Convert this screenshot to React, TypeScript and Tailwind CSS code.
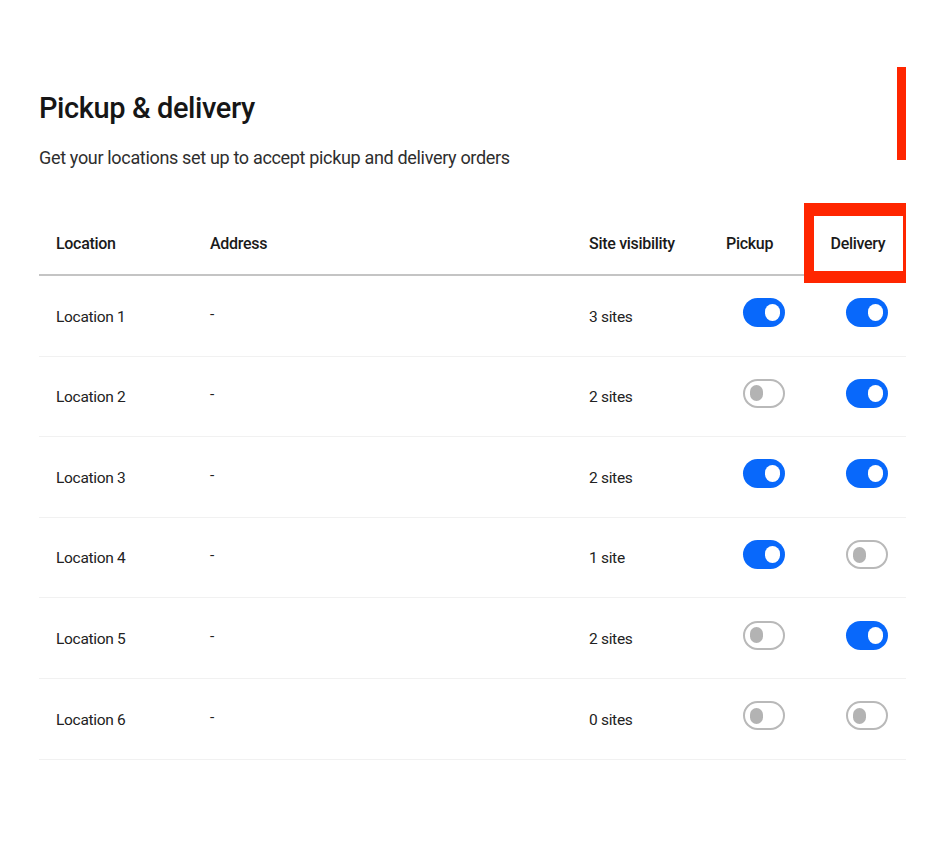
const rows = [
  { name: "Location 1", sites: "3 sites", pickup: true, delivery: true },
  { name: "Location 2", sites: "2 sites", pickup: false, delivery: true },
  { name: "Location 3", sites: "2 sites", pickup: true, delivery: true },
  { name: "Location 4", sites: "1 site", pickup: true, delivery: false },
  { name: "Location 5", sites: "2 sites", pickup: false, delivery: true },
  { name: "Location 6", sites: "0 sites", pickup: false, delivery: false },
]

const Toggle = ({ on }: { on: boolean }) => {
  if (on) {
    return (
      <div className="ml-[17px] flex h-[29px] w-[42px] items-center justify-end rounded-full bg-[#0868fb] pr-[5px]">
        <div className="h-[17px] w-[15px] rounded-full bg-white" />
      </div>
    )
  }
  return (
    <div className="ml-[17px] flex h-[29px] w-[42px] items-center rounded-full border-2 border-[#b9b9b9] bg-white pl-[5px]">
      <div className="h-[16px] w-[13px] rounded-full bg-[#b3b3b3]" />
    </div>
  )
}

const App = () => {
  return (
    <div
      className="relative min-h-[854px] w-[936px] bg-white px-[39px] pt-[90px] text-[#1c1c1c]"
      style={{ fontFamily: "Roboto, 'Liberation Sans', sans-serif" }}
    >
      <h1 className="text-[29px] font-medium leading-[36px] tracking-[-0.4px] text-[#161616]">Pickup &amp; delivery</h1>
      <p className="mt-[20px] text-[18px] leading-[24px] tracking-[-0.33px] text-[#2e2e2e]">
        Get your locations set up to accept pickup and delivery orders
      </p>

      <div className="mt-[43px] w-[867px]">
        <div className="grid h-[63px] grid-cols-[154px_379px_137px_103px_1fr] items-center border-b-2 border-[#c4c4c4] pl-[17px] text-[16px] font-medium tracking-[-0.3px] text-[#1a1a1a]">
          <div>Location</div>
          <div>Address</div>
          <div>Site visibility</div>
          <div>Pickup</div>
          <div className="relative self-stretch">
            {/* annotation box round the Delivery heading */}
            <div className="absolute -left-[25px] -top-[10px] flex h-[80px] w-[102px] items-center justify-center border-b-[12px] border-l-[10px] border-r-[3px] border-t-[13px] border-[#ff2600] bg-white pr-[1px]">
              Delivery
            </div>
          </div>
        </div>
        {rows.map((r, i) => (
          <div
            key={i}
            className="grid h-[80.6px] grid-cols-[154px_379px_137px_103px_1fr] items-center border-b border-[#f1f1f1] pl-[17px] text-[15.5px] tracking-[-0.3px] text-[#222]"
          >
            <div className="pt-[3px]">{r.name}</div>
            <div className="-mt-[3px]">-</div>
            <div className="pt-[3px]">{r.sites}</div>
            <div className="-mt-[6px]"><Toggle on={r.pickup} /></div>
            <div className="-mt-[6px]"><Toggle on={r.delivery} /></div>
          </div>
        ))}
      </div>

      {/* annotation bar */}
      <div className="absolute left-[897px] top-[67px] h-[93px] w-[9px] bg-[#ff2600]" />
    </div>
  )
}

export default App
